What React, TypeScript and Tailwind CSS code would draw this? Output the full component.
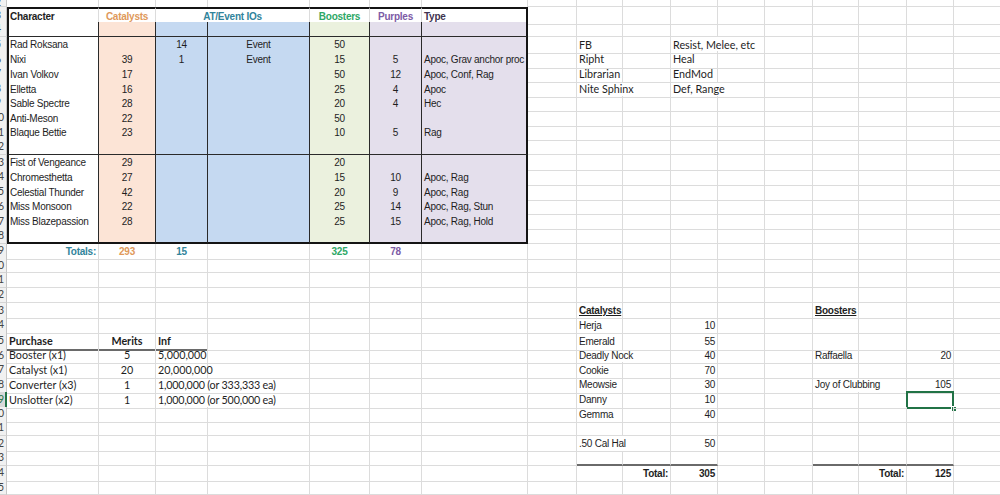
import React from 'react';

type Cell = { t?: string; span?: 2; b?: string; r?: string; x?: string; sel?: boolean };
type RowMap = Record<string, Cell>;

const COLS = ['A', 'B', 'C', 'D', 'E', 'F', 'G', 'H', 'I', 'J', 'K', 'L', 'M', 'N', 'O', 'P', 'Q'];

const GB = 'border-b border-b-[#dcdcdc]';
const GR = 'border-r border-r-[#dcdcdc]';
const TB = 'border-b border-b-[#2a2a2a]';
const TR = 'border-r border-r-[#2a2a2a]';
const TB2 = 'border-b-2 border-b-[#141414]';
const TR2 = 'border-r-2 border-r-[#141414]';
const TOT = 'border-b-2 border-b-[#6a6a6a]';

const ARIAL = "font-['Liberation_Sans',Arial,sans-serif] text-[10px] tracking-[-0.25px]";
const CAL = "font-['Lato',sans-serif] text-[10.75px]";

const C_ORANGE = 'text-[#e0995a]';
const C_TEAL = 'text-[#31849b]';
const C_GREEN = 'text-[#2ea866]';
const C_PURPLE = 'text-[#7d5ba6]';

const bodyRow = (v: string[], last = false): RowMap => {
  const b = last ? TB2 : TB;
  return {
    A: { t: v[0], b, r: TR, x: `${ARIAL} border-l-2 border-l-[#141414] bg-white pl-[1px]` },
    B: { t: v[1], b, r: TR, x: `${ARIAL} bg-[#fce4d6] justify-center` },
    C: { t: v[2], b, r: TR, x: `${ARIAL} bg-[#c5d9f1] justify-center` },
    D: { t: v[3], b, r: TR, x: `${ARIAL} bg-[#c5d9f1] justify-center` },
    E: { t: v[4], b, r: TR, x: `${ARIAL} bg-[#ebf1de] justify-center` },
    F: { t: v[5], b, r: TR, x: `${ARIAL} bg-[#e4dfec] justify-center` },
    G: { t: v[6], b, r: TR2, x: `${ARIAL} bg-[#e4dfec]` },
  };
};

const cal = (t: string, extra = ''): Cell => ({ t, x: `${CAL} ${extra}` });
const ari = (t: string, extra = ''): Cell => ({ t, x: `${ARIAL} ${extra}` });
const num = (t: string): Cell => ({ t, x: `${ARIAL} justify-end` });

const rows: Record<number, RowMap> = {
  2: { A: { b: '' }, B: { b: '' }, C: { b: '' }, D: { b: '' }, E: { b: '' }, F: { b: '' }, G: { b: '' } },
  3: {
    A: { t: 'Character', b: TB, x: `${ARIAL} font-bold border-t-2 border-t-[#141414] border-l-2 border-l-[#141414] pl-[1px]` },
    B: { t: 'Catalysts', b: TB, x: `${ARIAL} font-bold ${C_ORANGE} justify-center border-t-2 border-t-[#141414]` },
    C: { t: 'AT/Event IOs', span: 2, b: TB, x: `${ARIAL} font-bold ${C_TEAL} justify-center border-t-2 border-t-[#141414]` },
    E: { t: 'Boosters', b: TB, x: `${ARIAL} font-bold ${C_GREEN} justify-center border-t-2 border-t-[#141414]` },
    F: { t: 'Purples', b: TB, x: `${ARIAL} font-bold ${C_PURPLE} justify-center border-t-2 border-t-[#141414]` },
    G: { t: 'Type', b: TB, r: TR2, x: `${ARIAL} font-bold text-[#3f3350] border-t-2 border-t-[#141414]` },
  },
  4: bodyRow(['', '', '', '', '', '', '']),
  5: {
    ...bodyRow(['Rad Roksana', '', '14', 'Event', '50', '', '']),
    I: cal('FB'),
    K: { ...cal('Resist, Melee, etc'), span: 2 },
  },
  6: {
    ...bodyRow(['Nixi', '39', '1', 'Event', '15', '5', 'Apoc, Grav anchor proc']),
    I: cal('Ripht'),
    K: cal('Heal'),
  },
  7: {
    ...bodyRow(['Ivan Volkov', '17', '', '', '50', '12', 'Apoc, Conf, Rag']),
    I: cal('Librarian'),
    K: cal('EndMod'),
  },
  8: {
    ...bodyRow(['Elletta', '16', '', '', '25', '4', 'Apoc']),
    I: { ...cal('Nite Sphinx'), span: 2 },
    K: { ...cal('Def, Range'), span: 2 },
  },
  9: bodyRow(['Sable Spectre', '28', '', '', '20', '4', 'Hec']),
  10: bodyRow(['Anti-Meson', '22', '', '', '50', '', '']),
  11: bodyRow(['Blaque Bettie', '23', '', '', '10', '5', 'Rag']),
  12: bodyRow(['', '', '', '', '', '', '']),
  13: bodyRow(['Fist of Vengeance', '29', '', '', '20', '', '']),
  14: bodyRow(['Chromesthetta', '27', '', '', '15', '10', 'Apoc, Rag']),
  15: bodyRow(['Celestial Thunder', '42', '', '', '20', '9', 'Apoc, Rag']),
  16: bodyRow(['Miss Monsoon', '22', '', '', '25', '14', 'Apoc, Rag, Stun']),
  17: bodyRow(['Miss Blazepassion', '28', '', '', '25', '15', 'Apoc, Rag, Hold']),
  18: bodyRow(['', '', '', '', '', '', ''], true),
  19: {
    A: ari('Totals:', `font-bold ${C_TEAL} justify-end`),
    B: ari('293', `font-bold ${C_ORANGE} justify-center`),
    C: ari('15', `font-bold ${C_TEAL} justify-center`),
    E: ari('325', `font-bold ${C_GREEN} justify-center`),
    F: ari('78', `font-bold ${C_PURPLE} justify-center`),
  },
  23: {
    I: ari('Catalysts', 'font-bold underline underline-offset-[1px]'),
    N: ari('Boosters', 'font-bold underline underline-offset-[1px]'),
  },
  24: { I: ari('Herja'), K: num('10') },
  25: {
    A: { t: 'Purchase', b: TOT, x: `${CAL} font-bold` },
    B: { t: 'Merits', b: TOT, x: `${CAL} font-bold justify-center` },
    C: { t: 'Inf', b: TOT, x: `${CAL} font-bold` },
    I: ari('Emerald'),
    K: num('55'),
  },
  26: {
    A: cal('Booster (x1)'),
    B: cal('5', 'justify-center'),
    C: cal('5,000,000'),
    I: { ...ari('Deadly Nock'), span: 2 },
    K: num('40'),
    N: ari('Raffaella'),
    P: num('20'),
  },
  27: {
    A: cal('Catalyst (x1)'),
    B: cal('20', 'justify-center'),
    C: cal('20,000,000'),
    I: ari('Cookie'),
    K: num('70'),
  },
  28: {
    A: cal('Converter (x3)'),
    B: cal('1', 'justify-center'),
    C: { ...cal('1,000,000 (or 333,333 ea)', 'tracking-[-0.2px]'), span: 2 },
    I: ari('Meowsie'),
    K: num('30'),
    N: { ...ari('Joy of Clubbing'), span: 2 },
    P: num('105'),
  },
  29: {
    A: cal('Unslotter (x2)'),
    B: cal('1', 'justify-center'),
    C: { ...cal('1,000,000 (or 500,000 ea)', 'tracking-[-0.2px]'), span: 2 },
    I: ari('Danny'),
    K: num('10'),
    P: { sel: true },
  },
  30: { I: ari('Gemma'), K: num('40') },
  32: { I: { ...ari('.50 Cal Hal'), span: 2 }, K: num('50') },
  33: { I: { b: TOT }, J: { b: TOT }, K: { b: TOT }, N: { b: TOT }, O: { b: TOT }, P: { b: TOT } },
  34: {
    J: ari('Total:', 'font-bold justify-end'),
    K: ari('305', 'font-bold justify-end'),
    O: ari('Total:', 'font-bold justify-end'),
    P: ari('125', 'font-bold justify-end'),
  },
};

const SELECTED_ROW = 29;

function RowHead({ n }: { n: number }) {
  const sel = n === SELECTED_ROW;
  return (
    <div
      className={`relative overflow-hidden border-b border-b-[#d4d4d4] ${
        sel ? 'bg-[#d9d9d9] border-r-2 border-r-[#217346]' : 'bg-[#f1f1f1] border-r border-r-[#c6c6c6]'
      }`}
    >
      <span
        className={`absolute left-[-15px] top-0 bottom-0 w-[26px] flex items-center justify-center font-['Lato',sans-serif] text-[10.5px] ${
          sel ? 'text-[#217346]' : 'text-[#444]'
        }`}
      >
        {n}
      </span>
    </div>
  );
}

function SheetRow({ n }: { n: number }) {
  const cells = rows[n] || {};
  const out: React.ReactNode[] = [<RowHead key="h" n={n} />];
  for (let i = 0; i < COLS.length; i++) {
    const L = COLS[i];
    const c = cells[L] || {};
    const span = c.span || 1;
    out.push(
      <div
        key={L}
        className={[
          c.b ?? GB,
          c.r ?? GR,
          span === 2 ? 'col-span-2' : '',
          'relative flex min-w-0 items-center overflow-visible whitespace-nowrap px-[2px] text-[#1e1e1e]',
          c.x ?? '',
        ].join(' ')}
      >
        {c.t}
        {c.sel && (
          <>
            <div className="pointer-events-none absolute -left-[1px] -top-[1px] right-[-1px] bottom-[-1px] border-2 border-[#217346]" />
            <div className="absolute right-[-4px] bottom-[-4px] h-[6px] w-[6px] border border-white bg-[#217346]" />
          </>
        )}
      </div>
    );
    i += span - 1;
  }
  return (
    <div
      className={`grid grid-cols-[7px_92px_57px_52px_102px_60px_52px_106px_49px_46px_48px_47px_47px_48px_46px_48px_47px_60px] ${
        n === 2 ? 'h-[7px]' : 'h-[14.8px]'
      }`}
    >
      {out}
    </div>
  );
}

export default function App() {
  const list: number[] = [];
  for (let n = 2; n <= 36; n++) list.push(n);
  return (
    <div className="h-[495px] w-[1000px] overflow-hidden bg-white">
      {list.map((n) => (
        <SheetRow key={n} n={n} />
      ))}
    </div>
  );
}
